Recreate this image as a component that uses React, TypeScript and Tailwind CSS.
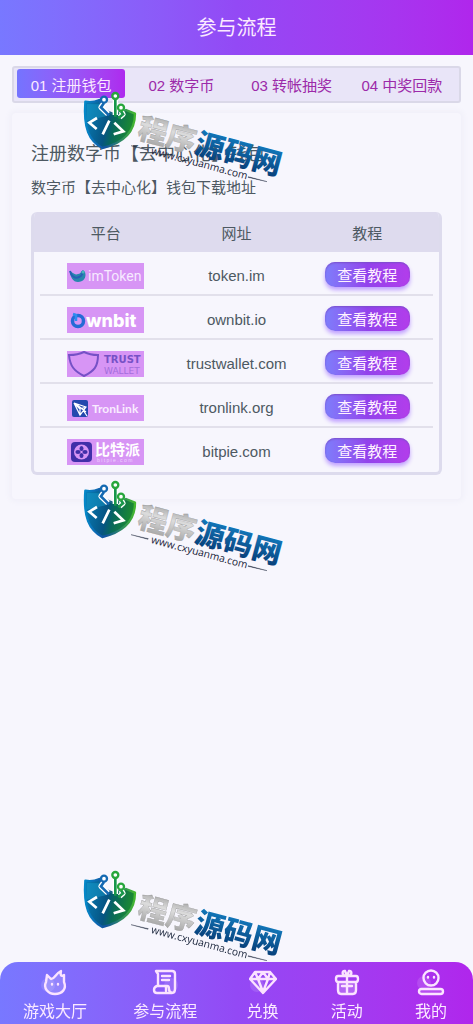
import type { ReactNode } from "react";

const FONT = "font-['Liberation_Sans','Noto_Sans_CJK_SC',sans-serif]";

const tabs = ["01 注册钱包", "02 数字币", "03 转帐抽奖", "04 中奖回款"];

function ImTokenLogo() {
  return (
    <svg viewBox="0 0 77 26" className="h-[26px] w-[77px] bg-[#d795f5]" role="img" aria-label="imToken">
      <path d="M3 8c4 3 6 4 8 3 2 0 3-2 5-4l2 2c2 6-2 10-7 10C6 19 3 14 3 8Z" fill="#2787ad" />
      <path d="M3 8c1 5 5 8 9 6 3-1 4-4 3-6" fill="none" stroke="#2760b5" strokeWidth="2" />
      <circle cx="16" cy="9" r="1.6" fill="#45b7bd" />
      <text x="21" y="18" fontFamily="Roboto, sans-serif" fontSize="14" fill="#f6eaff">imToken</text>
    </svg>
  );
}

function OwnbitLogo() {
  return (
    <svg viewBox="0 0 77 26" className="h-[26px] w-[77px] bg-[#d795f5]" role="img" aria-label="Ownbit">
      <circle cx="11" cy="14" r="5.5" fill="none" stroke="#256bd6" strokeWidth="3.5" />
      <path d="M6 7l3 1v6" fill="none" stroke="#2f8cf0" strokeWidth="2.5" />
      <text x="19" y="20" fontFamily="Inter, sans-serif" fontWeight="800" fontSize="18" fill="#fff">wnbit</text>
    </svg>
  );
}

function TrustLogo() {
  return (
    <svg viewBox="0 0 77 26" className="h-[26px] w-[77px] bg-[#d795f5]" role="img" aria-label="Trust Wallet">
      <path d="M2 4Q11 4 17 1q6 3 14 3c0 12-4 16-14 21C7 20 3 15 2 4Z" fill="none" stroke="#7651c6" strokeWidth="2" />
      <text x="37" y="12" fontFamily="DejaVu Sans, sans-serif" fontWeight="700" fontSize="10" fill="#7651c6">TRUST</text>
      <text x="37" y="23" fontFamily="DejaVu Sans, sans-serif" fontSize="9" fill="#a36edb">WALLET</text>
    </svg>
  );
}

function TronLinkLogo() {
  return (
    <svg viewBox="0 0 77 26" className="h-[26px] w-[77px] bg-[#d795f5]" role="img" aria-label="TronLink">
      <rect x="5" y="5" width="16" height="17" rx="2" fill="#2449ae" />
      <path d="M7 8l12 4-6 8L7 8l6 6 6-2M13 14v6M9 9l10 8M16 15l4 6" fill="none" stroke="#fff" strokeWidth="1.2" />
      <text x="25" y="18" fontFamily="Lato, sans-serif" fontSize="12" fontWeight="700" fill="#f9ecff">TronLink</text>
    </svg>
  );
}

function BitpieLogo() {
  return (
    <svg viewBox="0 0 77 26" className="h-[26px] w-[77px] bg-[#d795f5]" role="img" aria-label="比特派">
      <rect x="4" y="3" width="21" height="20" rx="4" fill="#402fa9" />
      <circle cx="14.5" cy="13" r="7.5" fill="#d795f5" />
      <g fill="#402fa9">
        <ellipse cx="14.5" cy="9.5" rx="2" ry="2.6" />
        <ellipse cx="14.5" cy="16.5" rx="2" ry="2.6" />
        <ellipse cx="11" cy="13" rx="2.6" ry="2" />
        <ellipse cx="18" cy="13" rx="2.6" ry="2" />
      </g>
      <text x="28" y="16" fontFamily="Noto Sans CJK SC, sans-serif" fontSize="15" fontWeight="700" fill="#fff">比特派</text>
      <text x="30" y="23" fontFamily="Liberation Sans, sans-serif" fontSize="5" fill="#f0d3ff">b i t p i e . c o m</text>
    </svg>
  );
}

const wallets: { site: string; logo: ReactNode }[] = [
  { site: "token.im", logo: <ImTokenLogo /> },
  { site: "ownbit.io", logo: <OwnbitLogo /> },
  { site: "trustwallet.com", logo: <TrustLogo /> },
  { site: "tronlink.org", logo: <TronLinkLogo /> },
  { site: "bitpie.com", logo: <BitpieLogo /> },
];

function NavIcon({ children }: { children: ReactNode }) {
  return (
    <svg viewBox="0 0 28 28" className="size-7" fill="none" stroke="#fbe3ff" strokeWidth="2.4" strokeLinecap="round" strokeLinejoin="round" aria-hidden="true">
      {children}
    </svg>
  );
}

const navItems: { label: string; icon: ReactNode }[] = [
  {
    label: "游戏大厅",
    icon: (
      <NavIcon>
        <circle cx="7" cy="17" r="7" fill="#fff" fillOpacity=".12" stroke="none" />
        <path d="M6 7l4 4c4 0 4-5 10-8-1 4 0 6 3 4v7c3 7-2 12-9 12S2 20 5 14Z" fill="#fff" fillOpacity=".15" />
        <path d="M11 16v.5M17 16v.5" />
      </NavIcon>
    ),
  },
  {
    label: "参与流程",
    icon: (
      <NavIcon>
        <circle cx="20" cy="17" r="7" fill="#fff" fillOpacity=".12" stroke="none" />
        <path d="M7 18V6L5 3h16q3 0 3 3v15q0 4-3 4H6q-3 0-3-3t3-4h10q2 0 2 3t3 4M11 8h8M11 12h7" />
        <path d="M15 19v4" />
      </NavIcon>
    ),
  },
  {
    label: "兑换",
    icon: (
      <NavIcon>
        <circle cx="8" cy="17" r="7" fill="#fff" fillOpacity=".12" stroke="none" />
        <path d="M6 4h15l6 7-13 14L1 11ZM1 11h26M9 11l5 13 5-13M6 4l3 7 5-7 5 7 2-7" />
      </NavIcon>
    ),
  },
  {
    label: "活动",
    icon: (
      <NavIcon>
        <path d="M5 14h18v11H5Z" fill="#fff" fillOpacity=".2" stroke="none" />
        <path d="M5 8h18q2 0 2 3t-2 3H5q-2 0-2-3t2-3ZM5 14v8q0 4 3 4h12q3 0 3-4v-8M14 8v18M14 8C8 8 9 2 12 3l2 5 2-5c3-1 4 5-2 5M9 18h10" />
      </NavIcon>
    ),
  },
  {
    label: "我的",
    icon: (
      <NavIcon>
        <circle cx="7" cy="15" r="7" fill="#fff" fillOpacity=".12" stroke="none" />
        <circle cx="14" cy="10" r="7.5" />
        <path d="M11 9v.5M17 9v.5" />
        <rect x="2" y="21" width="24" height="5" rx="2.5" fill="#fff" fillOpacity=".15" />
      </NavIcon>
    ),
  },
];

function Watermark({ id, place }: { id: string; place: string }) {
  return (
    <svg viewBox="0 0 660 300" className={`pointer-events-none absolute left-[75px] z-20 w-[220px] ${place}`} role="img" aria-label="程序源码网">
      <defs>
        <linearGradient id={`${id}-shield`} x1="0" y1="0.3" x2="1" y2="0.5">
          <stop offset="0" stopColor="#087bb4" />
          <stop offset=".45" stopColor="#065482" />
          <stop offset=".6" stopColor="#08685b" />
          <stop offset="1" stopColor="#1f8f2b" />
        </linearGradient>
        <linearGradient id={`${id}-edge`}>
          <stop offset="0" stopColor="#0588c8" />
          <stop offset=".4" stopColor="#1252a0" />
          <stop offset="1" stopColor="#45b82f" />
        </linearGradient>
        <linearGradient id={`${id}-silver`} x1="0" y1="0" x2="0" y2="1">
          <stop offset="0" stopColor="#8a8a8a" />
          <stop offset=".45" stopColor="#dcdcdc" />
          <stop offset="1" stopColor="#9a9a9a" />
        </linearGradient>
        <linearGradient id={`${id}-blue`} x1="0" y1="0" x2="0" y2="1">
          <stop offset="0" stopColor="#1589ce" />
          <stop offset="1" stopColor="#06366f" />
        </linearGradient>
      </defs>
      <path d="M31 47Q53 51 73 42l13 30 30 12 37-12 27 11c0 53-32 87-98 103C42 164 25 127 31 47Z" fill={`url(#${id}-shield)`} stroke={`url(#${id}-edge)`} strokeWidth="7" strokeLinejoin="round" />
      <path d="M36 54l39 1 17 36-58 13Z" fill="#18a0cf" opacity=".45" />
      <path d="M87 51l-9 13 21 20M121 42v45M138 76l6 9-10 9" fill="none" stroke="#fff" strokeWidth="16" strokeLinejoin="round" />
      <path d="M87 51l-9 13 24 24" fill="none" stroke="#1469b2" strokeWidth="8" />
      <path d="M121 42v50M138 76l6 9-14 12" fill="none" stroke="#17964a" strokeWidth="8" />
      <g fill="#fff" strokeWidth="7">
        <circle cx="87" cy="41" r="9" stroke="#1469b2" />
        <circle cx="121" cy="30" r="9" stroke="#27a63b" />
        <circle cx="138" cy="65" r="9" stroke="#27a63b" />
      </g>
      <path d="M66 96l-23 14 22 19M103 104l-20 41M118 110l27 26-29 9" fill="none" stroke="#fff" strokeWidth="8" />
      <g transform="rotate(15 185 158)" fontFamily="Noto Sans CJK SC, sans-serif" fontWeight="900">
        <text x="183" y="155" fontSize="88" fill={`url(#${id}-silver)`} stroke="#999" strokeWidth="1">程序</text>
        <text x="360" y="155" fontSize="88" fill={`url(#${id}-blue)`}>源码网</text>
        <text x="237" y="191" fontSize="31" fontWeight="400" fontFamily="Open Sans, sans-serif" fill="#172238">www.cxyuanma.com</text>
      </g>
      <path d="M168 179l52 12-1 2ZM520 272l56 15-57-13Z" fill="#172238" stroke="#172238" />
    </svg>
  );
}

export default function App() {
  return (
    <div className={`relative min-h-screen bg-[#f7f6fd] pb-16 text-[15px] text-[#4d5962] ${FONT}`}>
      <header className="flex h-[55px] items-center justify-center bg-linear-to-r from-[#7878ff] via-[#9349f5] to-[#b026ec]">
        <h1 className="text-xl text-[#fbeaff]">参与流程</h1>
      </header>

      <main className="px-3 pt-[11px]">
        <div role="tablist" className="grid h-[37px] grid-cols-4 gap-0.5 rounded-[3px] border-2 border-[#dad8e8] bg-[#e9e5f8] px-[3px] pt-px pb-[3px]">
          {tabs.map((tab, i) => (
            <button
              key={tab}
              type="button"
              role="tab"
              aria-selected={i === 0}
              className={
                i === 0
                  ? "rounded-[3px] bg-linear-to-r from-[#7474ff] to-[#ae29ee] pt-1.5 whitespace-nowrap text-[#fbeaff]"
                  : "pt-1.5 whitespace-nowrap text-[#9c2aa9]"
              }
            >
              {tab}
            </button>
          ))}
        </div>

        <section className="mt-2.5 rounded-sm px-[19px] pt-[27px] pb-6 shadow-[0_0_5px_3px_#f1f0f9]">
          <h2 className="text-lg leading-7">注册数字币【去中心化】钱包</h2>
          <p className="mt-2 leading-6">数字币【去中心化】钱包下载地址</p>

          <div className="mt-3 overflow-hidden rounded-md border-[3px] border-t-0 border-[#dddbed]">
            <table className="w-full table-fixed">
              <colgroup>
                <col className="w-[34%]" />
                <col className="w-[32%]" />
                <col className="w-[34%]" />
              </colgroup>
              <thead className="bg-[#dedbee]">
                <tr className="h-10">
                  <th scope="col" className="pt-1 pl-1.5 font-normal">平台</th>
                  <th scope="col" className="pt-1 font-normal">网址</th>
                  <th scope="col" className="pt-1 pr-1.5 font-normal">教程</th>
                </tr>
              </thead>
              <tbody>
                {wallets.map(({ site, logo }) => (
                  <tr key={site} className="group">
                    <td className="p-0 pl-1.5">
                      <div className="flex h-11 items-center justify-center border-b-2 border-[#e2e0eb] pt-1.5 group-last:border-transparent">{logo}</div>
                    </td>
                    <td className="p-0">
                      <div className="flex h-11 items-center justify-center border-b-2 border-[#e2e0eb] pt-1.5 group-last:border-transparent">{site}</div>
                    </td>
                    <td className="p-0 pr-1.5">
                      <div className="flex h-11 items-center justify-center border-b-2 border-[#e2e0eb] pt-0.5 group-last:border-transparent">
                        <button
                          type="button"
                          className="h-[25px] w-[85px] rounded-[10px] bg-linear-to-r from-[#7d7dfb] via-[#9342ec] to-[#b33deb] pt-0.5 leading-none text-[#fff2ff] shadow-[0_3px_4px_#c0a0ff,inset_0_1px_2px_#7b4fcb]"
                        >
                          查看教程
                        </button>
                      </div>
                    </td>
                  </tr>
                ))}
              </tbody>
            </table>
          </div>
        </section>
      </main>

      <Watermark id="wm1" place="top-[86px]" />
      <Watermark id="wm2" place="top-[475px]" />
      <Watermark id="wm3" place="top-[865px]" />

      <nav className="fixed inset-x-0 bottom-0 z-10 grid h-[62px] grid-cols-[110fr_110fr_84fr_84fr_84fr] rounded-t-[18px] bg-linear-to-r from-[#7878ff] via-[#9349f5] to-[#b026ec]">
        {navItems.map(({ label, icon }) => (
          <a key={label} href="#" className="flex flex-col items-center pt-1.5 text-base leading-8 text-[#fbeaff]">
            {icon}
            {label}
          </a>
        ))}
      </nav>
    </div>
  );
}
